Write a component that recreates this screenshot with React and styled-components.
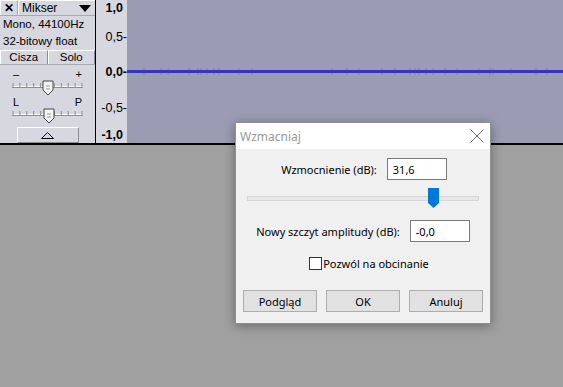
import styled, { createGlobalStyle } from "styled-components";

const GlobalStyle = createGlobalStyle`
  html, body {
    margin: 0;
    padding: 0;
    background: #a0a0a0;
  }
  #root {
    width: 563px;
    height: 387px;
    overflow: hidden;
  }
`;

const Screen = styled.div`
  position: relative;
  width: 563px;
  height: 387px;
  background: #a0a0a0;
`;

const Track = styled.div`
  display: flex;
  height: 143px;
  border-bottom: 2px solid #000;
  background: #d6d7df;
`;

const Panel = styled.div`
  width: 95px;
  display: flex;
  flex-direction: column;
  border-right: 1px solid #000;
  font-family: "Liberation Sans", Arial, sans-serif;
  font-size: 11px;
  color: #000;
  background: #d6d7df;
`;

const TitleRow = styled.div`
  display: flex;
  height: 16px;
  border-bottom: 1px solid #a8a9b0;
`;

const CloseBox = styled.div`
  width: 16px;
  display: flex;
  align-items: center;
  justify-content: center;
  border-right: 1px solid #a8a9b0;
  border-top: 1px solid #fff;
  border-left: 1px solid #fff;
  font-weight: bold;
  font-size: 12px;
`;

const NameBox = styled.div`
  flex: 1;
  display: flex;
  align-items: center;
  justify-content: space-between;
  padding: 0 4px 0 3px;
  border-top: 1px solid #fff;
  border-left: 1px solid #fff;
  font-size: 12px;
`;

const DropArrow = styled.span`
  width: 0;
  height: 0;
  border-left: 6px solid transparent;
  border-right: 6px solid transparent;
  border-top: 7px solid #000;
`;

const InfoLine = styled.div`
  height: 17px;
  line-height: 17px;
  padding-left: 3px;
  font-size: 11.5px;
`;

const ButtonRow = styled.div`
  display: flex;
  height: 15px;
  border-bottom: 1px solid #a8a9b0;
`;

const PanelButton = styled.div`
  flex: 1;
  display: flex;
  align-items: center;
  justify-content: center;
  border-top: 1px solid #fff;
  border-left: 1px solid #fff;
  border-right: 1px solid #8c8d94;
  font-size: 11.5px;
`;

const Spacer = styled.div`
  height: ${(p) => p.$h}px;
`;

const SliderBlock = styled.div`
  height: 28px;
  margin: 0 12px;
`;

const SliderLabels = styled.div`
  display: flex;
  justify-content: space-between;
  height: 11px;
  line-height: 11px;
  font-size: 11px;
  padding: 0 1px;
`;

const CollapseButton = styled.div`
  margin: 2px auto 0;
  width: 60px;
  height: 15px;
  display: flex;
  align-items: center;
  justify-content: center;
  border-top: 1px solid #fff;
  border-left: 1px solid #fff;
  border-right: 1px solid #8c8d94;
  border-bottom: 1px solid #8c8d94;
`;

const Ruler = styled.div`
  position: relative;
  width: 31px;
  background: #d6d7df;
  font-family: "Liberation Sans", Arial, sans-serif;
  font-size: 12.5px;
  color: #000;
`;

const RulerLabel = styled.div`
  position: absolute;
  right: ${(p) => (p.$tick ? 0 : 4)}px;
  font-weight: ${(p) => (p.$bold ? "bold" : "normal")};
  line-height: 14px;
`;

const Wave = styled.div`
  flex: 1;
  background: #9b9cb3;
`;

const Dialog = styled.div`
  position: absolute;
  left: 235px;
  top: 122px;
  width: 254px;
  height: 200px;
  display: flex;
  flex-direction: column;
  background: #f0f0f0;
  border: 1px solid #8f8f8f;
  box-shadow: 0 2px 10px rgba(0, 0, 0, 0.35);
  font-family: "Noto Sans", "Open Sans", sans-serif;
  font-size: 11px;
  color: #000;
`;

const DialogTitle = styled.div`
  height: 26px;
  display: flex;
  align-items: center;
  justify-content: space-between;
  padding: 0 6px 0 4px;
  background: #fff;
  color: #999;
  font-size: 12px;
`;

const DialogBody = styled.div`
  flex: 1;
  display: flex;
  flex-direction: column;
  align-items: center;
  padding-top: 9px;
`;

const FieldRow = styled.div`
  display: flex;
  align-items: center;
  gap: 10px;
  margin-left: ${(p) => p.$shift || 0}px;
`;

const TextInput = styled.div`
  width: 53px;
  height: 20px;
  padding-left: 5px;
  display: flex;
  align-items: center;
  background: #fff;
  border: 1px solid #7a7a7a;
`;

const SliderTrack = styled.div`
  position: relative;
  width: 230px;
  height: 3px;
  margin: 16px 0 19px 0;
  background: #e7e7e7;
  border: 1px solid #d6d6d6;
`;

const Thumb = styled.svg`
  position: absolute;
  left: 180px;
  top: -9px;
`;

const CheckRow = styled.label`
  display: flex;
  align-items: center;
  gap: 1px;
  margin: 14px 0 0 12px;
  height: 14px;
`;

const CheckBox = styled.span`
  width: 11px;
  height: 11px;
  border: 1px solid #333;
  background: #fff;
`;

const Buttons = styled.div`
  display: flex;
  gap: 9px;
  margin-top: 20px;
`;

const DialogButton = styled.div`
  width: 72px;
  height: 20px;
  display: flex;
  align-items: center;
  justify-content: center;
  background: #e1e1e1;
  border: 1px solid #adadad;
`;

function MiniSlider({ left, right, thumbX }) {
  return (
    <SliderBlock>
      <SliderLabels>
        <span>{left}</span>
        <span>{right}</span>
      </SliderLabels>
      <svg width="71" height="17" style={{ display: "block" }}>
        <line x1="0" y1="6.5" x2="71" y2="6.5" stroke="#fff" />
        <line x1="0" y1="7.5" x2="71" y2="7.5" stroke="#8c8d94" />
        {Array.from({ length: 11 }).map((_, i) => (
          <line key={i} x1={1 + i * 6.9} y1="3" x2={1 + i * 6.9} y2="7" stroke="#8c8d94" />
        ))}
        <path
          d={`M${thumbX - 5} 1 H${thumbX + 5} V10 L${thumbX} 15 L${thumbX - 5} 10 Z`}
          fill="#f4f4f6"
          stroke="#444"
        />
        <line x1={thumbX - 2} y1="6" x2={thumbX + 2} y2="6" stroke="#999" />
        <line x1={thumbX - 2} y1="9" x2={thumbX + 2} y2="9" stroke="#999" />
      </svg>
    </SliderBlock>
  );
}

function WaveLine() {
  const ticks = [17, 34, 41, 62, 71, 74, 80, 87, 92, 112, 125, 205, 220, 232, 255, 268, 283, 288, 292, 299, 306, 318, 330, 352, 363, 366, 384, 409, 420];
  return (
    <svg width="436" height="143" style={{ display: "block" }}>
      <rect x="0" y="70" width="436" height="3" fill="#3333c4" />
      {ticks.map((t) => (
        <line key={t} x1={t} y1="68" x2={t} y2="75" stroke="#4a4a9e" strokeWidth="1" opacity="0.35" />
      ))}
    </svg>
  );
}

export default function App() {
  return (
    <Screen>
      <GlobalStyle />
      <Track>
        <Panel>
          <TitleRow>
            <CloseBox>✕</CloseBox>
            <NameBox>
              Mikser
              <DropArrow />
            </NameBox>
          </TitleRow>
          <InfoLine>Mono, 44100Hz</InfoLine>
          <InfoLine>32-bitowy float</InfoLine>
          <ButtonRow>
            <PanelButton>Cisza</PanelButton>
            <PanelButton>Solo</PanelButton>
          </ButtonRow>
          <Spacer $h={5} />
          <MiniSlider left="–" right="+" thumbX={36} />
          <MiniSlider left="L" right="P" thumbX={37} />
          <CollapseButton>
            <svg width="13" height="7">
              <path d="M0.5 6.5 L6.5 0.5 L12.5 6.5 Z" fill="none" stroke="#000" />
            </svg>
          </CollapseButton>
        </Panel>
        <Ruler>
          <RulerLabel $bold style={{ top: 1 }}>1,0</RulerLabel>
          <RulerLabel $tick style={{ top: 30 }}>0,5-</RulerLabel>
          <RulerLabel $tick $bold style={{ top: 65 }}>0,0-</RulerLabel>
          <RulerLabel $tick style={{ top: 101 }}>-0,5-</RulerLabel>
          <RulerLabel $bold style={{ top: 128 }}>-1,0</RulerLabel>
        </Ruler>
        <Wave>
          <WaveLine />
        </Wave>
      </Track>

      <Dialog>
        <DialogTitle>
          Wzmacniaj
          <svg width="14" height="14">
            <path d="M0.5 0.5 L13.5 13.5 M13.5 0.5 L0.5 13.5" stroke="#777" strokeWidth="1" />
          </svg>
        </DialogTitle>
        <DialogBody>
          <FieldRow $shift={2}>
            <span>Wzmocnienie (dB):</span>
            <TextInput>31,6</TextInput>
          </FieldRow>
          <SliderTrack>
            <Thumb width="11" height="20">
              <path d="M0 0 H11 V15 L5.5 20 L0 15 Z" fill="#0078d7" />
            </Thumb>
          </SliderTrack>
          <FieldRow>
            <span>Nowy szczyt amplitudy (dB):</span>
            <TextInput>-0,0</TextInput>
          </FieldRow>
          <CheckRow>
            <CheckBox />
            Pozwól na obcinanie
          </CheckRow>
          <Buttons>
            <DialogButton>Podgląd</DialogButton>
            <DialogButton>OK</DialogButton>
            <DialogButton>Anuluj</DialogButton>
          </Buttons>
        </DialogBody>
      </Dialog>
    </Screen>
  );
}
